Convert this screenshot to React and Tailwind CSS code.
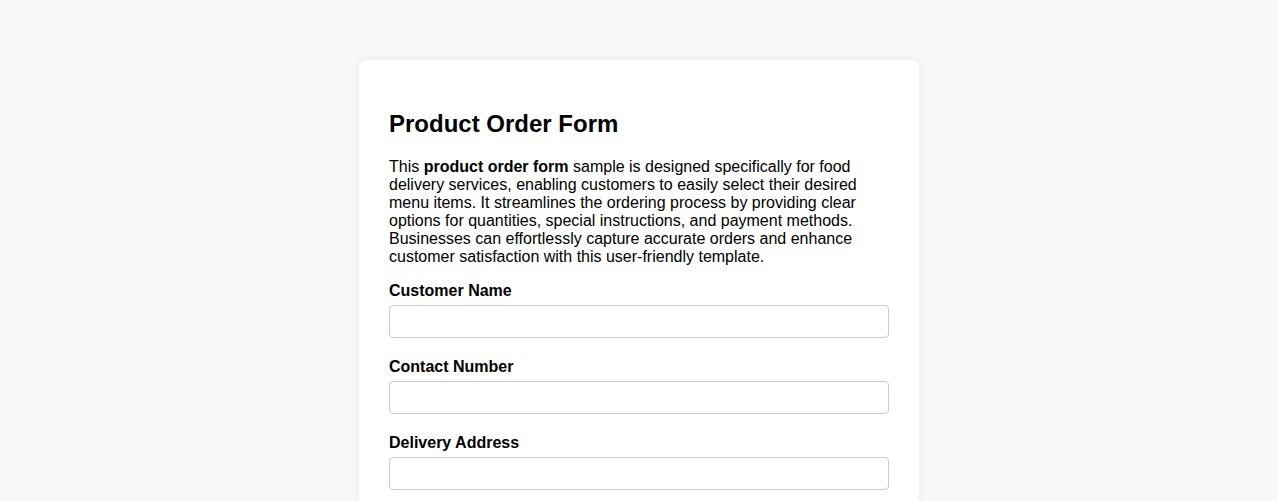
const fields = ["Customer Name", "Contact Number", "Delivery Address"];

const App = () => (
  <div className="min-h-screen bg-[#f8f8f8] pt-[60px] font-['Liberation_Sans',Arial,sans-serif] text-black">
    <div className="mx-auto w-[560px] rounded-lg bg-white px-[30px] pb-[30px] pt-[50px] shadow-[0_0_10px_rgba(0,0,0,0.06)]">
      <h1 className="text-[24px] font-bold leading-[28px]">Product Order Form</h1>
      <p className="mt-[20px] text-[16px] leading-[18px]">
        This <strong className="font-bold">product order form</strong> sample is designed specifically for food
        delivery services, enabling customers to easily select their desired menu items. It streamlines the
        ordering process by providing clear options for quantities, special instructions, and payment methods.
        Businesses can effortlessly capture accurate orders and enhance customer satisfaction with this
        user-friendly template.
      </p>
      <form className="mt-[16px]">
        {fields.map((label) => (
          <div key={label} className="mb-[20px]">
            <label className="mb-[5px] block text-[16px] font-bold leading-[18px]">{label}</label>
            <input
              type="text"
              className="block h-[33px] w-full rounded border border-[#cccccc] bg-white px-2 text-[16px] outline-none"
            />
          </div>
        ))}
      </form>
    </div>
  </div>
);

export default App;
